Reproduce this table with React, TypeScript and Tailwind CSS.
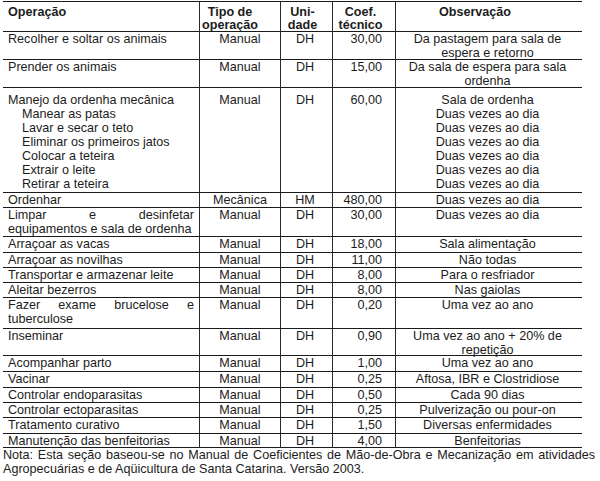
type Row = {
  op: React.ReactNode
  tipo: string
  un: string
  coef: string
  obs: string[]
  h: string
  pt?: string
}

const Sub = ({ children }: { children: React.ReactNode }) => <div className="pl-[14px]">{children}</div>

const rows: Row[] = [
  { op: 'Recolher e soltar os animais', tipo: 'Manual', un: 'DH', coef: '30,00', obs: ['Da pastagem para sala de', 'espera e retorno'], h: 'h-[28px]' },
  { op: 'Prender os animais', tipo: 'Manual', un: 'DH', coef: '15,00', obs: ['Da sala de espera para sala', 'ordenha'], h: 'h-[28px]' },
  {
    op: (
      <>
        <div>Manejo da ordenha mecânica</div>
        <Sub>Manear as patas</Sub>
        <Sub>Lavar e secar o teto</Sub>
        <Sub>Eliminar os primeiros jatos</Sub>
        <Sub>Colocar a teteira</Sub>
        <Sub>Extrair o leite</Sub>
        <Sub>Retirar a teteira</Sub>
      </>
    ),
    tipo: 'Manual', un: 'DH', coef: '60,00',
    obs: ['Sala de ordenha', 'Duas vezes ao dia', 'Duas vezes ao dia', 'Duas vezes ao dia', 'Duas vezes ao dia', 'Duas vezes ao dia', 'Duas vezes ao dia'],
    h: 'h-[105px]', pt: 'pt-[5px]',
  },
  { op: 'Ordenhar', tipo: 'Mecânica', un: 'HM', coef: '480,00', obs: ['Duas vezes ao dia'], h: 'h-[15px]' },
  { op: 'Limpar e desinfetar equipamentos e sala de ordenha', tipo: 'Manual', un: 'DH', coef: '30,00', obs: ['Duas vezes ao dia'], h: 'h-[29px]' },
  { op: 'Arraçoar as vacas', tipo: 'Manual', un: 'DH', coef: '18,00', obs: ['Sala alimentação'], h: 'h-[16px]' },
  { op: 'Arraçoar as novilhas', tipo: 'Manual', un: 'DH', coef: '11,00', obs: ['Não todas'], h: 'h-[15px]' },
  { op: 'Transportar e armazenar leite', tipo: 'Manual', un: 'DH', coef: '8,00', obs: ['Para o resfriador'], h: 'h-[15px]' },
  { op: 'Aleitar bezerros', tipo: 'Manual', un: 'DH', coef: '8,00', obs: ['Nas gaiolas'], h: 'h-[15px]' },
  { op: 'Fazer exame brucelose e tuberculose', tipo: 'Manual', un: 'DH', coef: '0,20', obs: ['Uma vez ao ano'], h: 'h-[31px]' },
  { op: 'Inseminar', tipo: 'Manual', un: 'DH', coef: '0,90', obs: ['Uma vez ao ano + 20% de', 'repetição'], h: 'h-[27px]' },
  { op: 'Acompanhar parto', tipo: 'Manual', un: 'DH', coef: '1,00', obs: ['Uma vez ao ano'], h: 'h-[16px]' },
  { op: 'Vacinar', tipo: 'Manual', un: 'DH', coef: '0,25', obs: ['Aftosa, IBR e Clostridiose'], h: 'h-[16px]' },
  { op: 'Controlar endoparasitas', tipo: 'Manual', un: 'DH', coef: '0,50', obs: ['Cada 90 dias'], h: 'h-[15px]' },
  { op: 'Controlar ectoparasitas', tipo: 'Manual', un: 'DH', coef: '0,25', obs: ['Pulverização ou pour-on'], h: 'h-[15px]' },
  { op: 'Tratamento curativo', tipo: 'Manual', un: 'DH', coef: '1,50', obs: ['Diversas enfermidades'], h: 'h-[16px]' },
  { op: 'Manutenção das benfeitorias', tipo: 'Manual', un: 'DH', coef: '4,00', obs: ['Benfeitorias'], h: 'h-[14px]' },
]

const grid = 'grid grid-cols-[196px_81px_52px_63px_187px] border-b border-[#1a1a1a]'
const vline = 'border-l border-[#2a2a2a]'

export default function App() {
  return (
    <div className="w-[600px] h-[481px] bg-white text-[#1c1c1c] text-[12.6px] leading-[14px] font-['Liberation_Sans',Arial,sans-serif] pt-px overflow-hidden">
      <div className="ml-[3px] w-[579px] border-t border-[#1a1a1a]">
        <div className={`${grid} h-[30px] font-bold leading-[13px]`}>
          <div className="pl-[5px] pt-[4px]">Operação</div>
          <div className={`${vline} pt-[4px] pr-[20px] text-center`}>Tipo de<br />operação</div>
          <div className={`${vline} pt-[4px] pr-[8px] text-center`}>Uni-<br />dade</div>
          <div className={`${vline} pt-[4px] pr-[7px] text-center`}>Coef.<br />técnico</div>
          <div className={`${vline} pt-[4px] pr-[28px] text-center`}>Observação</div>
        </div>
        {rows.map((r, i) => (
          <div key={i} className={`${grid} ${r.h}`}>
            <div className={`pl-[5px] pr-[5px] text-justify ${r.pt ?? ''}`}>{r.op}</div>
            <div className={`${vline} text-center ${r.pt ?? ''}`}>{r.tipo}</div>
            <div className={`${vline} text-center pr-[3px] ${r.pt ?? ''}`}>{r.un}</div>
            <div className={`${vline} text-right pr-[13px] ${r.pt ?? ''}`}>{r.coef}</div>
            <div className={`${vline} text-center pr-[3px] ${r.pt ?? ''}`}>
              {r.obs.map((o, j) => (
                <div key={j}>{o}</div>
              ))}
            </div>
          </div>
        ))}
      </div>
      <div className="pl-[3px]">
        <div className="w-[592px] text-justify [text-align-last:justify]">
          Nota: Esta seção baseou-se no Manual de Coeficientes de Mão-de-Obra e Mecanização em atividades
        </div>
        <div>Agropecuárias e de Aqüicultura de Santa Catarina. Versão 2003.</div>
      </div>
    </div>
  )
}
